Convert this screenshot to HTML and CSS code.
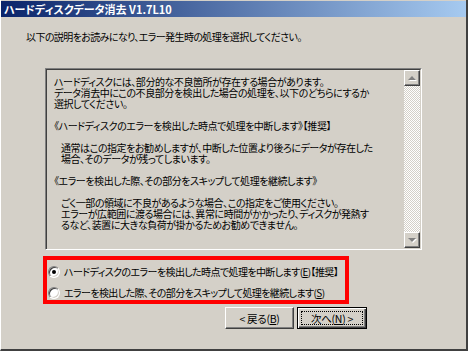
FILE: index.html
```html
<!DOCTYPE html>
<html lang="ja">
<head>
<meta charset="utf-8">
<link rel="stylesheet" href="styles.css">
</head>
<body>
<div class="window">
  <div class="titlebar">ハードディスクデータ消去 V1.7L10</div>
  <div class="intro">以下の説明をお読みになり、エラー発生時の処理を選択してください。</div>
  <div class="textbox">
    <div class="text">
      <div class="line">ハードディスクには、部分的な不良箇所が存在する場合があります。</div>
      <div class="line">データ消去中にこの不良部分を検出した場合の処理を、以下のどちらにするか</div>
      <div class="line">選択してください。</div>
      <div class="line"></div>
      <div class="line">《ハードディスクのエラーを検出した時点で処理を中断します》【推奨】</div>
      <div class="line"></div>
      <div class="line ind">通常はこの指定をお勧めしますが、中断した位置より後ろにデータが存在した</div>
      <div class="line ind">場合、そのデータが残ってしまいます。</div>
      <div class="line"></div>
      <div class="line">《エラーを検出した際、その部分をスキップして処理を継続します》</div>
      <div class="line"></div>
      <div class="line ind">ごく一部の領域に不良があるような場合、この指定をご使用ください。</div>
      <div class="line ind">エラーが広範囲に渡る場合には、異常に時間がかかったり、ディスクが発熱す</div>
      <div class="line ind">るなど、装置に大きな負荷が掛かるためお勧めできません。</div>
    </div>
    <div class="scrollbar">
      <div class="sbtn"><span class="arrow up"></span></div>
      <div class="track"></div>
      <div class="sbtn"><span class="arrow down"></span></div>
    </div>
  </div>
  <div class="options">
    <div class="opt"><span class="radio checked"></span><span>ハードディスクのエラーを検出した時点で処理を中断します(<u>E</u>)【推奨】</span></div>
    <div class="opt"><span class="radio"></span><span>エラーを検出した際、その部分をスキップして処理を継続します(<u>S</u>)</span></div>
  </div>
  <div class="buttons">
    <div class="btn">&lt; 戻る(<u>B</u>)</div>
    <div class="btn default"><span class="focus">次へ(<u>N</u>) &gt;</span></div>
  </div>
</div>
</body>
</html>
```
FILE: styles.css
```css
html, body {
  margin: 0;
  padding: 0;
}
body {
  width: 468px;
  height: 351px;
  overflow: hidden;
  font-family: "Noto Sans CJK JP", sans-serif;
  font-feature-settings: "palt";
  color: #000;
}
.window {
  box-sizing: border-box;
  width: 468px;
  height: 351px;
  background: #d4d0c8;
  border-left: 1px solid #ffffff;
  border-right: 2px solid #404040;
  border-bottom: 2px solid #404040;
  display: flex;
  flex-direction: column;
}
.titlebar {
  margin-top: 1px;
  height: 16px;
  background: linear-gradient(to right, #0a246a, #a6caf0);
  color: #fff;
  font-weight: bold;
  font-size: 11px;
  line-height: 16px;
  padding-left: 3px;
  white-space: nowrap;
}
.intro {
  margin-top: 13px;
  margin-left: 25px;
  font-size: 10px;
  letter-spacing: -0.6px;
  line-height: 14px;
  height: 14px;
  white-space: nowrap;
}
.textbox {
  box-sizing: border-box;
  margin-top: 24px;
  margin-left: 44px;
  width: 377px;
  height: 182px;
  border-top: 1px solid #808080;
  border-left: 1px solid #808080;
  border-right: 1px solid #ffffff;
  border-bottom: 1px solid #ffffff;
  display: flex;
}
.text {
  flex: 1;
  border-top: 1px solid #404040;
  border-left: 1px solid #404040;
  padding: 6px 0 0 7px;
  font-size: 10px;
  letter-spacing: -0.45px;
  line-height: 11px;
  white-space: nowrap;
  overflow: hidden;
}
.line {
  height: 11px;
}
.ind {
  padding-left: 7px;
}
.scrollbar {
  width: 16px;
  display: flex;
  flex-direction: column;
  border-top: 1px solid #404040;
  border-right: 1px solid #d4d0c8;
  border-bottom: 1px solid #d4d0c8;
}
.sbtn {
  box-sizing: border-box;
  width: 16px;
  height: 16px;
  background: #d4d0c8;
  border-top: 1px solid #fff;
  border-left: 1px solid #fff;
  border-right: 1px solid #404040;
  border-bottom: 1px solid #404040;
  box-shadow: inset -1px -1px 0 #808080;
  display: flex;
  align-items: center;
  justify-content: center;
}
.track {
  flex: 1;
  background-image: repeating-conic-gradient(#ffffff 0 25%, #d4d0c8 0 50%);
  background-size: 2px 2px;
}
.arrow {
  width: 0;
  height: 0;
  border-left: 4px solid transparent;
  border-right: 4px solid transparent;
  filter: drop-shadow(1px 1px 0 #fff);
}
.arrow.up {
  border-bottom: 4px solid #808080;
  margin-top: -1px;
}
.arrow.down {
  border-top: 4px solid #808080;
}
.options {
  box-sizing: border-box;
  margin-top: 6px;
  margin-left: 42px;
  width: 306px;
  height: 48px;
  border: 4px solid #ff0000;
  padding: 1px 0 0 1px;
  font-size: 10px;
  letter-spacing: -0.6px;
}
.opt {
  height: 21px;
  display: flex;
  align-items: center;
  gap: 4px;
  white-space: nowrap;
}
.radio {
  box-sizing: border-box;
  width: 12px;
  height: 12px;
  border-radius: 50%;
  background: #fff;
  border: 1px solid;
  border-color: #808080 #ffffff #ffffff #808080;
  box-shadow: inset 1px 1px 0 #404040, inset -1px -1px 0 #d4d0c8;
  position: relative;
  flex: none;
}
.radio.checked::after {
  content: "";
  position: absolute;
  left: 3px;
  top: 3px;
  width: 4px;
  height: 4px;
  border-radius: 50%;
  background: #000;
}
.buttons {
  margin-top: 3px;
  margin-left: 224px;
  display: flex;
  gap: 3px;
}
.btn {
  box-sizing: border-box;
  width: 69px;
  height: 22px;
  background: #d4d0c8;
  border-top: 1px solid #fff;
  border-left: 1px solid #fff;
  border-right: 1px solid #404040;
  border-bottom: 1px solid #404040;
  box-shadow: inset -1px -1px 0 #808080;
  font-size: 10.5px;
  letter-spacing: -0.3px;
  display: flex;
  align-items: center;
  justify-content: center;
  white-space: nowrap;
}
.btn.default {
  width: 70px;
  border: 1px solid #000;
  box-shadow: inset 1px 1px 0 #fff, inset -1px -1px 0 #404040, inset -2px -2px 0 #808080;
  padding: 3px;
}
.focus {
  box-sizing: border-box;
  width: 100%;
  height: 100%;
  border: 1px dotted #000;
  display: flex;
  align-items: center;
  justify-content: center;
}
```
